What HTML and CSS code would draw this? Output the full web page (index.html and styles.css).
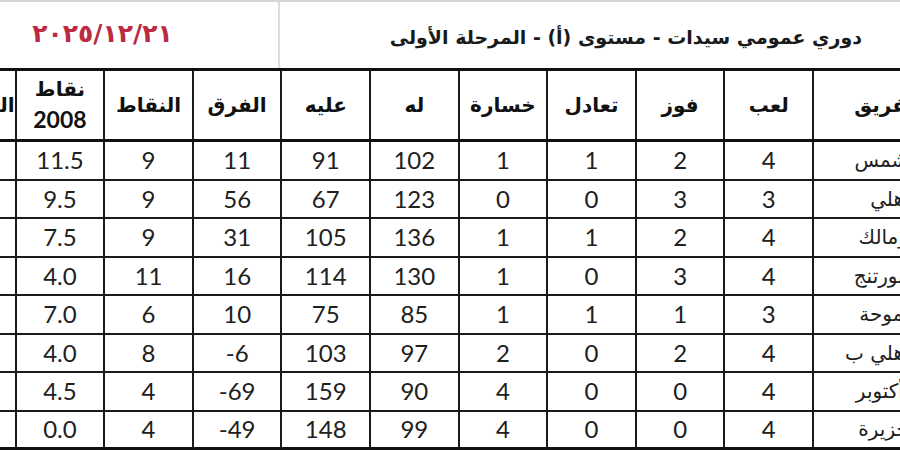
FILE: index.html
```html
<!DOCTYPE html>
<html lang="ar">
<head>
<meta charset="utf-8">
<title>دوري عمومي سيدات</title>
<link rel="stylesheet" href="styles.css">
</head>
<body>
<div class="sheet">
  <div class="top">
    <div class="date-cell"><span class="date">٢٠٢٥/١٢/٢١</span></div>
    <div class="title-cell" dir="rtl">دوري عمومي سيدات - مستوى (أ) - المرحلة الأولى</div>
  </div>
  <table class="standings" dir="rtl">
    <colgroup>
      <col class="c-team">
      <col class="c-num"><col class="c-num"><col class="c-num"><col class="c-num"><col class="c-num">
      <col class="c-num"><col class="c-num"><col class="c-num"><col class="c-num">
      <col class="c-rank">
    </colgroup>
    <thead>
      <tr>
        <th class="team">الفريق</th>
        <th>لعب</th>
        <th>فوز</th>
        <th>تعادل</th>
        <th>خسارة</th>
        <th>له</th>
        <th>عليه</th>
        <th>الفرق</th>
        <th>النقاط</th>
        <th>نقاط<br><span class="yr">2008</span></th>
        <th class="rank">الترتيب</th>
      </tr>
    </thead>
    <tbody>
      <tr><td class="team">الشمس</td><td>4</td><td>2</td><td>1</td><td>1</td><td>102</td><td>91</td><td>11</td><td>9</td><td>11.5</td><td></td></tr>
      <tr><td class="team">الأهلي</td><td>3</td><td>3</td><td>0</td><td>0</td><td>123</td><td>67</td><td>56</td><td>9</td><td>9.5</td><td></td></tr>
      <tr><td class="team">الزمالك</td><td>4</td><td>2</td><td>1</td><td>1</td><td>136</td><td>105</td><td>31</td><td>9</td><td>7.5</td><td></td></tr>
      <tr><td class="team">سبورتنج</td><td>4</td><td>3</td><td>0</td><td>1</td><td>130</td><td>114</td><td>16</td><td>11</td><td>4.0</td><td></td></tr>
      <tr><td class="team">سموحة</td><td>3</td><td>1</td><td>1</td><td>1</td><td>85</td><td>75</td><td>10</td><td>6</td><td>7.0</td><td></td></tr>
      <tr><td class="team">الأهلي ب</td><td>4</td><td>2</td><td>0</td><td>2</td><td>97</td><td>103</td><td>-6</td><td>8</td><td>4.0</td><td></td></tr>
      <tr><td class="team">٦ أكتوبر</td><td>4</td><td>0</td><td>0</td><td>4</td><td>90</td><td>159</td><td>-69</td><td>4</td><td>4.5</td><td></td></tr>
      <tr><td class="team">الجزيرة</td><td>4</td><td>0</td><td>0</td><td>4</td><td>99</td><td>148</td><td>-49</td><td>4</td><td>0.0</td><td></td></tr>
    </tbody>
  </table>
</div>
</body>
</html>
```

FILE: styles.css
```css
html, body {
  margin: 0;
  padding: 0;
  background: #fff;
  overflow: hidden;
}
body {
  width: 900px;
  height: 450px;
  font-family: "Lato", "DejaVu Sans", sans-serif;
  color: #1e1e1e;
}
.sheet {
  width: 998px;
  margin-left: -73px;
}
.top {
  display: flex;
  height: 66px;
  border-top: 2px solid #d6d6d6;
}
.date-cell {
  width: 353px;
  border-right: 2px solid #dcdcdc;
  display: flex;
  align-items: center;
  justify-content: center;
  padding-bottom: 4px;
  box-sizing: border-box;
}
.date {
  direction: ltr;
  unicode-bidi: isolate;
  font-family: "DejaVu Sans", sans-serif;
  font-weight: bold;
  font-size: 25px;
  color: #bb2a40;
}
.title-cell {
  flex: 1;
  display: flex;
  align-items: center;
  justify-content: flex-start;
  padding-right: 63px;
  padding-top: 3px;
  font-family: "DejaVu Sans", sans-serif;
  font-weight: bold;
  font-size: 19px;
  color: #1a1a1a;
}
.standings {
  width: 998px;
  table-layout: fixed;
  border-collapse: separate;
  border-spacing: 0;
  border-top: 3px solid #111;
}
.c-team { width: 113px; }
.c-num { width: 88.6px; }
.c-rank { width: 87.6px; }
.standings th,
.standings td {
  border-left: 2px solid #1a1a1a;
  border-bottom: 2px solid #1a1a1a;
  padding: 0;
  text-align: center;
  white-space: nowrap;
  overflow: hidden;
}
.standings td {
  direction: ltr;
}
.standings thead tr { height: 71px; }
.standings th {
  border-bottom: 3px solid #111;
  font-family: "DejaVu Sans", sans-serif;
  font-weight: bold;
  font-size: 20px;
  line-height: 30px;
  color: #111;
}
.standings th .yr {
  font-family: "Lato", "DejaVu Sans", sans-serif;
  font-size: 23px;
}
.standings th.rank {
  padding-left: 14px;
}
.standings tbody tr { height: 38.5px; }
.standings td {
  font-size: 24px;
  line-height: 30px;
  color: #202020;
}
.standings .team {
  direction: rtl;
  text-align: right;
  padding-right: 4px;
  font-family: "DejaVu Sans", sans-serif;
  font-weight: normal;
  font-size: 20px;
}
.standings th.team { font-weight: bold; }
.standings tbody tr:last-child td { border-bottom: 3px solid #111; }
```
